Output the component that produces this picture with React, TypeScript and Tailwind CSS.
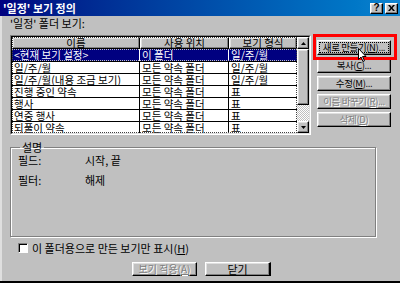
import React from 'react';

const raised =
  'border border-t-white border-l-white border-r-black border-b-black shadow-[inset_-1px_-1px_#808080,inset_1px_1px_#dfdfdf] bg-[#c0c0c0]';
const disabledText = 'text-[#808080] [text-shadow:1px_1px_#ffffff]';

const rows = [
  { name: '일/주/월', where: '모든 약속 폴더', kind: '일/주/월' },
  { name: '일/주/월(내용 조금 보기)', where: '모든 약속 폴더', kind: '일/주/월' },
  { name: '진행 중인 약속', where: '모든 약속 폴더', kind: '표' },
  { name: '행사', where: '모든 약속 폴더', kind: '표' },
  { name: '연중 행사', where: '모든 약속 폴더', kind: '표' },
  { name: '되풀이 약속', where: '모든 약속 폴더', kind: '표' },
];

const Key: React.FC<{ k: string }> = ({ k }) => <span className="underline">{k}</span>;

const SideButton: React.FC<{ children: React.ReactNode; disabled?: boolean; focus?: boolean }> = ({
  children,
  disabled,
  focus,
}) => (
  <div
    className={`${raised} w-[74px] h-[15px] flex items-center justify-center text-[9.5px] tracking-[-0.4px] leading-none whitespace-nowrap ${
      disabled ? disabledText : 'text-black'
    } ${focus ? 'outline-1 outline-dotted outline-black -outline-offset-3' : ''}`}
  >
    <span>{children}</span>
  </div>
);

const App: React.FC = () => {
  return (
    <div className="w-[400px] h-[283px] bg-[#c0c0c0] flex flex-col overflow-hidden border-b-2 border-b-black font-['Noto_Sans_CJK_KR',sans-serif] text-[11px] text-black">
      {/* Title bar */}
      <div className="h-[16px] shrink-0 flex items-center justify-between pl-[3px] pr-[2px] bg-gradient-to-r from-[#000080] to-[#1084d0]">
        <span className="text-white font-bold text-[11px] leading-none">'일정' 보기 정의</span>
        <div className="flex gap-[2px]">
          <div className={`${raised} w-[13px] h-[11px] flex items-center justify-center text-[10px] font-bold leading-none font-['Liberation_Sans',sans-serif]`}>
            ?
          </div>
          <div className={`${raised} w-[13px] h-[11px] flex items-center justify-center`}>
            <svg width="7" height="6" viewBox="0 0 7 6">
              <path d="M0 0h2l1.5 2L5 0h2L4.5 3 7 6H5L3.5 4 2 6H0l2.5-3z" fill="#000" />
            </svg>
          </div>
        </div>
      </div>

      <div className="flex-1 flex flex-col pl-[10px] border-l-2 border-l-[#dfdfdf]">
        <div className="mt-[1px] h-[13px] leading-[13px] -ml-[2px]">'일정' 폴더 보기:</div>

        {/* List + buttons */}
        <div className="mt-[5px] flex -ml-[2px]">
          <div className="w-[301px] h-[100px] border border-t-[#808080] border-l-[#808080] border-r-white border-b-white">
            <div className="h-full border border-t-black border-l-black border-r-[#dfdfdf] border-b-[#dfdfdf] flex text-[10.5px]">
              <div className="w-[285px] flex flex-col bg-white outline-1 outline-dotted outline-[#404040] -outline-offset-1">
                <div className="flex h-[12px] shrink-0">
                  <div className={`${raised} w-[128px] flex items-center justify-center leading-none`}>이름</div>
                  <div className={`${raised} w-[89px] flex items-center justify-center leading-none`}>사용 위치</div>
                  <div className={`${raised} w-[68px] flex items-center justify-center leading-none`}>보기 형식</div>
                </div>
                <div className="flex h-[12px] bg-[#000080] text-white outline-1 outline-dotted outline-[#c0c0c0] -outline-offset-1">
                  <div className="w-[128px] pl-[2px] leading-[12px] border-r border-r-white">&lt;현재 보기 설정&gt;</div>
                  <div className="w-[89px] pl-[2px] leading-[12px] border-r border-r-white">이 폴더</div>
                  <div className="w-[68px] pl-[2px] leading-[12px]">일/주/월</div>
                </div>
                {rows.map((r, i) => (
                  <div key={i} className="flex h-[12px] border-t border-t-black">
                    <div className="w-[128px] pl-[2px] leading-[11px] border-r border-r-black whitespace-nowrap">{r.name}</div>
                    <div className="w-[89px] pl-[2px] leading-[11px] border-r border-r-black whitespace-nowrap">{r.where}</div>
                    <div className="w-[68px] pl-[2px] leading-[11px] whitespace-nowrap">{r.kind}</div>
                  </div>
                ))}
              </div>
              {/* Scrollbar */}
              <div className="w-[12px] flex flex-col">
                <div className={`${raised} h-[12px] flex items-center justify-center`}>
                  <svg width="5" height="3" viewBox="0 0 5 3">
                    <path d="M2.5 0L5 3H0z" fill="#000" />
                  </svg>
                </div>
                <div className={`${raised} h-[56px]`} />
                <div className="flex-1 bg-[repeating-conic-gradient(#ffffff_0_25%,#c0c0c0_0_50%)] bg-[length:2px_2px]" />
                <div className={`${raised} h-[12px] flex items-center justify-center`}>
                  <svg width="5" height="3" viewBox="0 0 5 3">
                    <path d="M0 0h5L2.5 3z" fill="#000" />
                  </svg>
                </div>
              </div>
            </div>
          </div>

          <div className="ml-[6px] mt-[5px] flex flex-col gap-[3px] relative">
            <div className="absolute left-[-4px] top-[-6px] w-[84px] h-[26px] border-[3px] border-[#ff0000]" />
            <SideButton focus>
              새로 만들기(<Key k="N" />)...
            </SideButton>
            <SideButton>
              복사(<Key k="C" />)...
            </SideButton>
            <SideButton>
              수정(<Key k="M" />)...
            </SideButton>
            <SideButton disabled>
              이름 바꾸기(<Key k="R" />)...
            </SideButton>
            <SideButton disabled>
              삭제(<Key k="D" />)
            </SideButton>
            <svg className="absolute left-[41px] top-[8px]" width="9" height="14" viewBox="0 0 9 14">
              <path d="M0.5 0.5v11l2.5-2.5 2 4.5 1.5-0.7-2-4.3h3.5z" fill="#fff" stroke="#000" strokeWidth="1" />
            </svg>
          </div>
        </div>

        {/* Description group */}
        <fieldset className="mt-[6px] -ml-[2px] w-[366px] h-[96px] border border-[#808080] shadow-[inset_1px_1px_#ffffff,1px_1px_#ffffff] pl-[7px] pr-0 pb-0 pt-0 m-0">
          <legend className="px-[2px] ml-[2px] leading-[12px] h-[12px]">설명</legend>
          <div className="grid grid-cols-[67px_1fr] gap-y-[7px] mt-[1px]">
            <div className="h-[13px] leading-[13px]">필드:</div>
            <div className="h-[13px] leading-[13px]">시작, 끝</div>
            <div className="h-[13px] leading-[13px]">필터:</div>
            <div className="h-[13px] leading-[13px]">해제</div>
          </div>
        </fieldset>

        <div className="mt-[5px] h-[12px] flex items-center ml-[6px]">
          <div className="w-[10px] h-[10px] bg-white border border-t-[#808080] border-l-[#808080] border-r-white border-b-white shadow-[inset_1px_1px_#000000]" />
          <span className="ml-[4px] leading-none">
            이 폴더용으로 만든 보기만 표시(<Key k="H" />)
          </span>
        </div>

        <div className="mt-[8px] flex gap-[8px] ml-[120px]">
          <div className={`${raised} ${disabledText} w-[65px] h-[14px] flex items-center justify-center leading-none text-[10px] whitespace-nowrap`}>
            <span>
              보기 적용(<Key k="A" />)
            </span>
          </div>
          <div className={`${raised} w-[66px] h-[14px] flex items-center justify-center leading-none border-r-2`}>닫기</div>
        </div>
      </div>
    </div>
  );
};

export default App;
